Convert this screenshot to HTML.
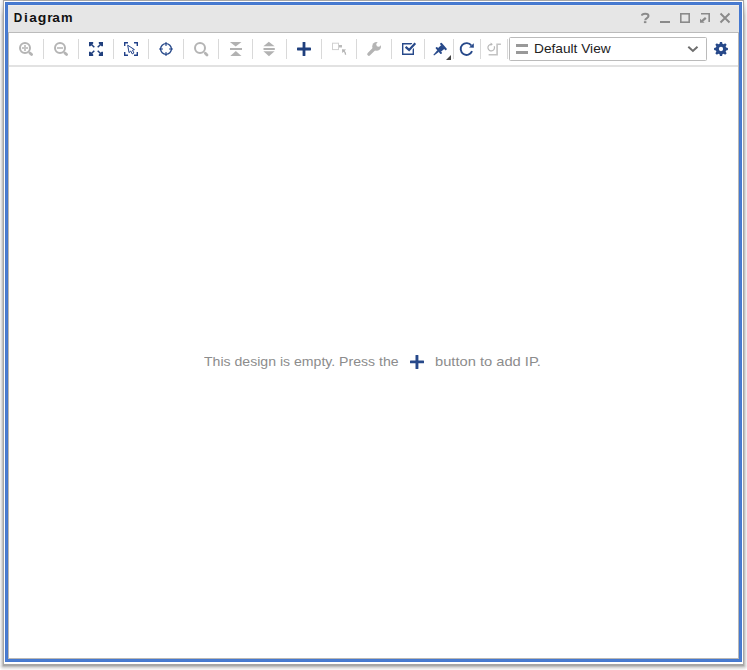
<!DOCTYPE html>
<html><head><meta charset="utf-8">
<style>
html,body{margin:0;padding:0;}
body{width:747px;height:670px;overflow:hidden;background:#fff;position:relative;font-family:"Liberation Sans",sans-serif;}
.a{position:absolute;}
svg{position:absolute;overflow:visible;}
</style></head><body>
<!-- shadow columns/rows -->
<div class="a" style="left:0;top:0;width:1px;height:665px;background:#eee"></div>
<div class="a" style="left:1px;top:0;width:1px;height:665px;background:#dcdcdc"></div>
<div class="a" style="left:2px;top:0;width:1px;height:665px;background:#c2c2c2"></div>
<div class="a" style="left:746px;top:0;width:1px;height:665px;background:#eee"></div>
<div class="a" style="left:745px;top:0;width:1px;height:665px;background:#dcdcdc"></div>
<div class="a" style="left:744px;top:0;width:1px;height:665px;background:#c2c2c2"></div>
<div class="a" style="left:4px;top:665px;width:739px;height:5px;background:linear-gradient(#a8a8a8 0,#a8a8a8 1px,#c0c0c0 1px,#c0c0c0 2px,#d8d8d8 2px,#d8d8d8 3px,#e8e8e8 3px,#e8e8e8 4px,#f4f4f4 4px)"></div>
<div class="a" style="left:743px;top:665px;width:4px;height:5px;background:radial-gradient(circle at .5px .5px,#a8a8a8 0,#c2c2c2 1px,#dadada 2px,#eaeaea 3px,#f5f5f5 4px,#fff 5px)"></div>
<div class="a" style="left:0;top:665px;width:4px;height:5px;background:radial-gradient(circle at 3.5px .5px,#a8a8a8 0,#c2c2c2 1px,#dadada 2px,#eaeaea 3px,#f5f5f5 4px,#fff 5px)"></div>
<div class="a" style="left:0;top:0;width:3px;height:16px;background:linear-gradient(rgba(255,255,255,.75),rgba(255,255,255,0))"></div>
<div class="a" style="left:744px;top:0;width:3px;height:16px;background:linear-gradient(rgba(255,255,255,.75),rgba(255,255,255,0))"></div>
<!-- frame -->
<div class="a" style="left:3px;top:0;width:741px;height:665px;background:#a6a6a6"></div>
<div class="a" style="left:4px;top:1px;width:739px;height:663px;background:#fff"></div>
<div class="a" style="left:5px;top:2px;width:737px;height:660px;background:#4478d0"></div>
<div class="a" style="left:6px;top:3px;width:735px;height:658px;background:#4a7ccf"></div>
<div class="a" style="left:7px;top:4px;width:733px;height:656px;background:#4478d0"></div>
<!-- inner -->
<div class="a" style="left:8px;top:5px;width:731px;height:654px;background:#bab8b5"></div>
<div class="a" style="left:8px;top:5px;width:731px;height:28px;background:#e6e6e6"></div>
<div class="a" style="left:8px;top:5px;width:731px;height:1px;background:#f0eeea"></div>
<div class="a" style="left:8px;top:32px;width:731px;height:1px;background:#bbb"></div>
<div class="a" style="left:9px;top:33px;width:729px;height:625px;background:#fff"></div>
<div class="a" style="left:9px;top:65px;width:729px;height:2px;background:#e2e2e2"></div>

<!-- toolbar separators -->
<div class="a" style="left:43px;top:39px;width:1px;height:20px;background:#d9d9d9"></div>
<div class="a" style="left:78px;top:39px;width:1px;height:20px;background:#d9d9d9"></div>
<div class="a" style="left:113px;top:39px;width:1px;height:20px;background:#d9d9d9"></div>
<div class="a" style="left:148px;top:39px;width:1px;height:20px;background:#d9d9d9"></div>
<div class="a" style="left:183px;top:39px;width:1px;height:20px;background:#d9d9d9"></div>
<div class="a" style="left:218px;top:39px;width:1px;height:20px;background:#d9d9d9"></div>
<div class="a" style="left:252px;top:39px;width:1px;height:20px;background:#d9d9d9"></div>
<div class="a" style="left:286px;top:39px;width:1px;height:20px;background:#d9d9d9"></div>
<div class="a" style="left:321px;top:39px;width:1px;height:20px;background:#d9d9d9"></div>
<div class="a" style="left:356px;top:39px;width:1px;height:20px;background:#d9d9d9"></div>
<div class="a" style="left:391px;top:39px;width:1px;height:20px;background:#d9d9d9"></div>
<div class="a" style="left:424px;top:39px;width:1px;height:20px;background:#d9d9d9"></div>
<div class="a" style="left:453px;top:39px;width:1px;height:20px;background:#d9d9d9"></div>
<div class="a" style="left:480px;top:39px;width:1px;height:20px;background:#d9d9d9"></div>
<div class="a" style="left:507px;top:39px;width:1px;height:20px;background:#d9d9d9"></div>
<!-- combo -->
<div class="a" style="left:509px;top:37px;width:196px;height:22px;border:1px solid #bbb;border-radius:1.5px;background:#fff"></div>
<div class="a" style="left:516px;top:44px;width:12px;height:3px;background:#999"></div>
<div class="a" style="left:516px;top:51px;width:12px;height:3px;background:#999"></div>
<div class="a" id="dv" style="left:534px;top:41px;font-size:13px;color:#222;line-height:16px;white-space:nowrap;transform-origin:0 0;transform:scaleX(1.054);">Default View</div>
<svg width="747" height="670" viewBox="0 0 747 670" style="left:0;top:0">
<!-- title buttons -->
<g fill="none" stroke="#8a8a8a">
<path d="M641.9 15.6C642 13.4 648.5 12.9 648.5 16.1C648.5 18.2 645.2 17.9 645.2 20.3" stroke-width="2"/><rect x="643.9" y="21.2" width="2.5" height="1.9" fill="#8a8a8a" stroke="none"/>
<rect x="660" y="21" width="10" height="2" fill="#8a8a8a" stroke="none"/>
<rect x="680.8" y="13.8" width="8.4" height="8.4" stroke-width="1.6"/>
<path d="M701 13.8H709.2V22" stroke-width="1.6"/>
<path d="M705.8 17.9L702 21.2" stroke-width="2.2"/>
<path d="M700 18.8V22.7H704.6Z" fill="#8a8a8a" stroke="none"/>
<path d="M720.5 13.5L729.5 22.5M729.5 13.5L720.5 22.5" stroke-width="1.9"/>
</g>
<!-- zoom in -->
<g id="zin" fill="none" stroke="#b4b4b4">
<circle cx="25" cy="48" r="5" stroke-width="2"/>
<path d="M22 48h6M25 45v6" stroke="#c6c6c6" stroke-width="2"/>
<path d="M29.9 52.9L31.6 54.6" stroke-width="2.8" stroke-linecap="round"/>
</g>
<!-- zoom out -->
<g fill="none" stroke="#b4b4b4">
<circle cx="60" cy="48" r="5" stroke-width="2"/>
<path d="M57 48h6" stroke="#c6c6c6" stroke-width="2"/>
<path d="M64.9 52.9L66.6 54.6" stroke-width="2.8" stroke-linecap="round"/>
</g>
<!-- fit -->
<g fill="#21407e" stroke="#21407e">
<g id="arr"><path d="M89 42H93.2V43.4L90.4 46.2H89Z" stroke="none"/><path d="M91.2 44.2L94.3 47.3" stroke-width="1.5" fill="none"/></g>
<use href="#arr" transform="translate(192 0) scale(-1 1)"/>
<use href="#arr" transform="translate(0 98) scale(1 -1)"/>
<use href="#arr" transform="translate(192 98) scale(-1 -1)"/>
</g>
<!-- select area -->
<g fill="none" stroke="#22428a" stroke-width="1.4">
<path d="M124.7 46V42.7H128"/><path d="M134 42.7H137.3V46"/><path d="M124.7 52V55.3H128"/><path d="M134 55.3H137.3V52"/>
<path d="M127.7 45.2L129 52.6L130.7 51L132.2 53.9L133.9 53L132.5 50.2L134.4 49.6Z" stroke-width="1" fill="#fff" stroke-linejoin="round"/>
</g>
<!-- crosshair -->
<g fill="none" stroke="#27498a">
<path d="M166 42V46M166 52V56M159 49H163M169 49H173" stroke-width="1.7" stroke="#7288b6"/>
<circle cx="166" cy="49" r="5.4" stroke-width="1.4"/>
</g>
<!-- search -->
<g fill="none" stroke="#b4b4b4">
<circle cx="200" cy="48" r="5" stroke-width="2"/>
<path d="M205.3 53.3L207 55" stroke-width="2.8" stroke-linecap="round"/>
</g>
<!-- collapse -->
<g fill="#b2b2b2">
<path d="M229.9 42H241.5L235.7 46.6Z"/><rect x="230" y="48" width="12" height="2"/><path d="M230.3 56H241.5L235.8 51Z"/>
</g>
<!-- expand -->
<g fill="#b2b2b2">
<path d="M263.4 46.3H274.6L268.8 41.8Z"/><rect x="263.5" y="48" width="11.3" height="2"/><path d="M263.4 51.2H274.6L269 56.2Z"/>
</g>
<!-- plus -->
<g fill="#1f3f7d">
<rect x="297" y="47.6" width="14" height="2.8" rx=".6"/><rect x="302.6" y="42" width="2.8" height="14" rx=".6"/>
</g>
<!-- box arrow -->
<g fill="none" stroke="#d0d0d0">
<rect x="332.5" y="43.2" width="6" height="6.4" stroke-width="1"/>
<rect x="339" y="45" width="3" height="2.5" fill="#bbb" stroke="none"/>
<path d="M342 49.3L346.1 49.6L342.3 53.1Z" fill="#b4b4b4" stroke="none"/>
<path d="M343.6 50.8Q345.6 52.2 345.6 54.8" stroke="#b4b4b4" stroke-width="1.3"/>
</g>
<!-- wrench -->
<g>
<path d="M368.9 54.1L375.8 47.2" stroke="#b4b4b4" stroke-width="3.4" stroke-linecap="round" fill="none"/>
<circle cx="376.6" cy="46.4" r="4.4" fill="#b4b4b4"/>
<circle cx="378.5" cy="44.5" r="2.2" fill="#fff"/>
<path d="M377.1 43.1L380.6 39.6L383.4 42.4L379.9 45.9Z" fill="#fff"/>
</g>
<!-- check -->
<g fill="none" stroke="#27498a">
<path d="M412.3 43.7H402.7V54.3H413.3V48.3" stroke-width="1.4"/>
<path d="M405.6 46.9L409.1 49.9L415.3 43.3" stroke="#fff" stroke-width="4.2"/>
<path d="M405.6 46.9L409.1 49.9L415.3 43.3" stroke-width="2.2"/>
</g>
<!-- pin -->
<g transform="translate(433.6 55) rotate(-41)" fill="#27498a">
<path d="M0 -.3L6.2 -1.15V1.15L0 .7Z"/>
<rect x="5.9" y="-4.2" width="2" height="8.4" rx=".8"/>
<rect x="7.6" y="-2.4" width="4.8" height="4.8"/>
<rect x="12" y="-4.4" width="2" height="8.9" rx=".8"/>
</g>
<path d="M446 60H451V55Z" fill="#444"/>
<!-- refresh -->
<g fill="none" stroke="#27498a">
<path d="M472.07 51.21A5.9 5.9 0 1 1 471.37 45.53" stroke-width="1.9"/>
<path d="M473.8 43.2V47.8L469 47.6Z" fill="#27498a" stroke="none"/>
</g>
<!-- regenerate -->
<g fill="none" stroke="#c2c2c2">
<path d="M488.6 54.8H497.1V44.2H500.9" stroke-width="1.6"/>
<path d="M494.2 46.2A3.3 3.3 0 1 1 491 44.3" stroke-width="1.2" stroke="#b8b8b8"/>
<path d="M490.6 42.6L492.9 44.3L490.6 46Z" fill="#b8b8b8" stroke="none"/>
</g>
<!-- chevron -->
<path d="M688.3 46.8L692.9 51L697.5 46.8" fill="none" stroke="#6e6e6e" stroke-width="2"/>
<!-- gear -->
<g id="gear" fill="#27498a" transform="translate(721 49)">
<path d="M-1.38 -5.17L-1.10 -6.91L1.10 -6.91L1.38 -5.17L2.68 -4.63L4.14 -5.70L5.70 -4.14L4.63 -2.67L5.17 -1.38L6.91 -1.10L6.91 1.10L5.17 1.38L4.63 2.67L5.70 4.14L4.14 5.70L2.68 4.63L1.38 5.17L1.10 6.91L-1.10 6.91L-1.38 5.17L-2.67 4.63L-4.14 5.70L-5.70 4.14L-4.63 2.67L-5.17 1.38L-6.91 1.10L-6.91 -1.10L-5.17 -1.38L-4.63 -2.68L-5.70 -4.14L-4.14 -5.70L-2.68 -4.63Z"/>
<circle r="2.15" fill="#fff"/>
</g>
<!-- center plus -->
<g fill="#27498a">
<rect x="410" y="360.4" width="14" height="2.9" rx=".5"/><rect x="415.5" y="355" width="2.9" height="14" rx=".5"/>
</g>
</svg>
<!-- title -->
<div id="title"><span class="a" style="left:8.2px;top:10px;width:20px;text-align:center;font-size:13px;font-weight:bold;color:#111;line-height:16px;transform:scaleX(0.9)">D</span><span class="a" style="left:15.9px;top:10px;width:20px;text-align:center;font-size:13px;font-weight:bold;color:#111;line-height:16px;transform:scaleX(1.05)">i</span><span class="a" style="left:22.5px;top:10px;width:20px;text-align:center;font-size:13px;font-weight:bold;color:#111;line-height:16px;transform:scaleX(1.05)">a</span><span class="a" style="left:31.9px;top:10px;width:20px;text-align:center;font-size:13px;font-weight:bold;color:#111;line-height:16px;transform:scaleX(1.08)">g</span><span class="a" style="left:40.2px;top:10px;width:20px;text-align:center;font-size:13px;font-weight:bold;color:#111;line-height:16px;transform:scaleX(1.05)">r</span><span class="a" style="left:46.4px;top:10px;width:20px;text-align:center;font-size:13px;font-weight:bold;color:#111;line-height:16px;transform:scaleX(1.05)">a</span><span class="a" style="left:56.9px;top:10px;width:20px;text-align:center;font-size:13px;font-weight:bold;color:#111;line-height:16px;transform:scaleX(1.0)">m</span></div>
<!-- center text -->
<div class="a" id="t1" style="left:204px;top:354px;font-size:13px;transform-origin:0 0;transform:scaleX(1.083);color:#8c8c8c;line-height:16px;white-space:nowrap;">This design is empty. Press the</div>
<div class="a" id="t2" style="left:435.4px;top:354px;font-size:13px;transform-origin:0 0;transform:scaleX(1.13);color:#8c8c8c;line-height:16px;white-space:nowrap;">button to add IP.</div>
</body></html>
